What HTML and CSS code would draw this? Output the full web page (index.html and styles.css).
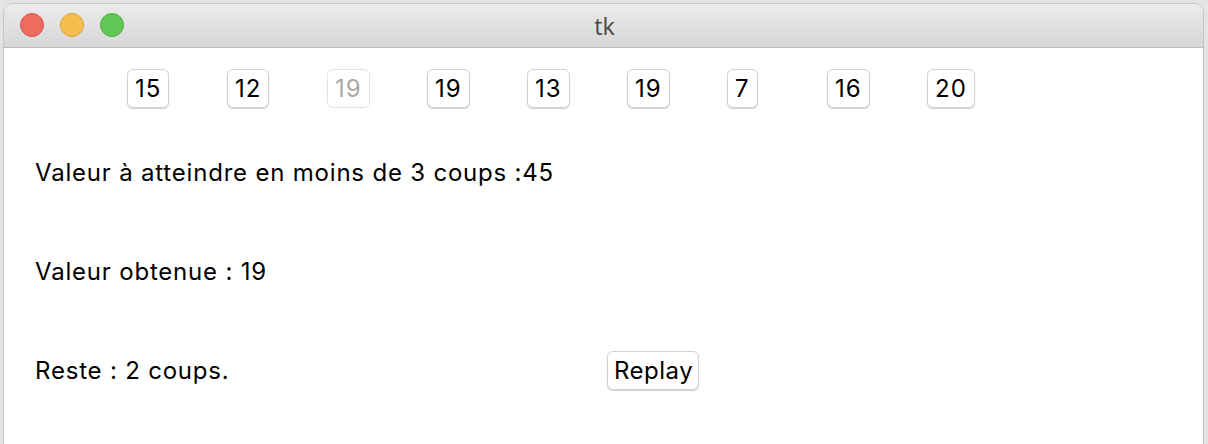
FILE: index.html
```html
<!DOCTYPE html>
<html lang="fr">
<head>
<meta charset="utf-8">
<title>tk</title>
<link rel="stylesheet" href="styles.css">
</head>
<body>
<div class="desk">
  <div class="window">
    <div class="titlebar">
      <div class="lights">
        <span class="light red"></span>
        <span class="light yellow"></span>
        <span class="light green"></span>
      </div>
      <div class="title">tk</div>
    </div>
    <div class="content">
      <div class="numbers">
        <div class="cell"><span class="btn">15</span></div>
        <div class="cell"><span class="btn">12</span></div>
        <div class="cell"><span class="btn disabled">19</span></div>
        <div class="cell"><span class="btn">19</span></div>
        <div class="cell"><span class="btn">13</span></div>
        <div class="cell"><span class="btn">19</span></div>
        <div class="cell"><span class="btn">7</span></div>
        <div class="cell"><span class="btn">16</span></div>
        <div class="cell"><span class="btn">20</span></div>
      </div>
      <div class="rows">
        <div class="row"><span class="label">Valeur à atteindre en moins de 3 coups :45</span></div>
        <div class="row"><span class="label">Valeur obtenue : 19</span></div>
        <div class="row last"><span class="label">Reste : 2 coups.</span><span class="btn replay">Replay</span></div>
      </div>
    </div>
  </div>
</div>
</body>
</html>
```

FILE: styles.css
```css
html, body {
  margin: 0;
  padding: 0;
}
body {
  width: 1208px;
  height: 444px;
  overflow: hidden;
  background: #e4e4e2;
  font-family: Inter, "Noto Sans", sans-serif;
}
.desk {
  padding: 3px 0 0 3px;
}
.window {
  width: 1199px;
  height: 460px;
  background: #ffffff;
  border: 1px solid #c4c4c4;
  border-radius: 10px;
  overflow: hidden;
}
.titlebar {
  position: relative;
  height: 43px;
  background: linear-gradient(#ececec, #d6d6d6);
  border-bottom: 1px solid #b9b9b9;
  display: flex;
  align-items: center;
  justify-content: center;
}
.lights {
  position: absolute;
  left: 16px;
  top: 9px;
  display: flex;
  gap: 16px;
}
.light {
  width: 24px;
  height: 24px;
  border-radius: 50%;
  box-sizing: border-box;
}
.red { background: #ee6b60; border: 1px solid #d5554b; }
.yellow { background: #f6be4f; border: 1px solid #dca13e; }
.green { background: #62c655; border: 1px solid #4fae42; }
.title {
  font-size: 23px;
  color: #4d4d4d;
  font-family: "Noto Sans", sans-serif;
  margin-left: 2px;
}
.content {
  padding: 21px 0 0 0;
}
.numbers {
  display: flex;
  padding-left: 123px;
}
.cell {
  width: 100px;
}
.btn {
  display: inline-block;
  box-sizing: border-box;
  height: 39px;
  line-height: 37px;
  padding: 0 7px 0 7px;
  font-size: 24px;
  color: #000;
  background: #fff;
  border: 1px solid #d2d2d2;
  border-radius: 6px;
  box-shadow: 0 1px 1px rgba(0,0,0,0.18);
  letter-spacing: 1px;
}
.btn.disabled {
  color: #a9a9a9;
  border-color: #e3e3e3;
  box-shadow: none;
}
.rows {
  padding: 44px 0 0 31px;
  display: flex;
  flex-direction: column;
  gap: 59px;
}
.row {
  height: 40px;
  display: flex;
  align-items: center;
}
.label {
  font-size: 24px;
  letter-spacing: 0.8px;
  color: #000;
}
.row.last .label {
  width: 572px;
}
.replay {
  padding: 0 5px 0 6px;
  letter-spacing: 0.5px;
}
```
